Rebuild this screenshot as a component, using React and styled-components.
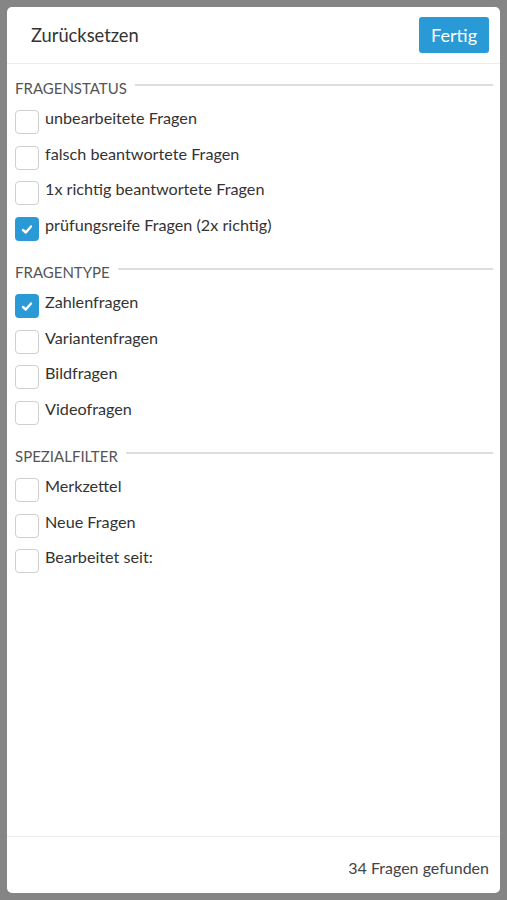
import React from "react";
import styled, { createGlobalStyle } from "styled-components";

const Global = createGlobalStyle`
  html, body {
    margin: 0;
    padding: 0;
    background: #858585;
    font-family: Lato, "Open Sans", sans-serif;
  }
`;

const Page = styled.div`
  padding: 7px;
  height: 900px;
  box-sizing: border-box;
`;

const Modal = styled.div`
  background: #fff;
  border-radius: 5px;
  height: 886px;
  display: flex;
  flex-direction: column;
  overflow: hidden;
`;

const Header = styled.header`
  display: flex;
  align-items: center;
  justify-content: space-between;
  height: 57px;
  padding: 0 11px 0 24px;
  border-bottom: 1px solid #ececec;
  box-sizing: border-box;
`;

const Title = styled.span`
  font-size: 18.3px;
  color: #333;
`;

const Button = styled.button`
  background: #2a9ad7;
  color: #fff;
  border: none;
  border-radius: 3px;
  font-family: inherit;
  font-size: 18px;
  height: 36px;
  padding: 0 12px;
`;

const Body = styled.div`
  flex: 1;
  padding: 14px 7px 0 8px;
`;

const Section = styled.section`
  margin-bottom: 10px;
`;

const SectionHead = styled.div`
  display: flex;
  align-items: center;
  gap: 8px;
  font-size: 15px;
  color: #555;
  text-transform: uppercase;
  height: 20px;
  margin-bottom: 12px;

  &::after {
    content: "";
    flex: 1;
    height: 2px;
    background: #ddd;
    margin-top: -6px;
  }
`;

const Row = styled.label`
  display: flex;
  align-items: flex-start;
  gap: 6px;
  height: 35.5px;
  font-size: 16.2px;
  color: #333;
`;

const Box = styled.span`
  width: 24px;
  height: 24px;
  box-sizing: border-box;
  border-radius: 4px;
  border: ${(p) => (p.checked ? "none" : "1px solid #cfcfcf")};
  background: ${(p) => (p.checked ? "#2a9ad7" : "#fff")};
  display: flex;
  align-items: center;
  justify-content: center;
  flex-shrink: 0;
`;

const Label = styled.span`
  line-height: 20px;
  margin-top: -2px;
`;

const Footer = styled.footer`
  height: 57px;
  box-sizing: border-box;
  border-top: 1px solid #ececec;
  display: flex;
  align-items: center;
  justify-content: flex-end;
  padding: 4px 11px 0 0;
  font-size: 16px;
  color: #444;
`;

const Check = () => (
  <svg width="14" height="14" viewBox="0 0 14 14">
    <path
      d="M3 8 L5.8 10.5 L11 4.5"
      fill="none"
      stroke="#fff"
      strokeWidth="2.4"
      strokeLinecap="round"
      strokeLinejoin="round"
    />
  </svg>
);

const sections = [
  {
    title: "Fragenstatus",
    items: [
      ["unbearbeitete Fragen", false],
      ["falsch beantwortete Fragen", false],
      ["1x richtig beantwortete Fragen", false],
      ["prüfungsreife Fragen (2x richtig)", true],
    ],
  },
  {
    title: "Fragentype",
    items: [
      ["Zahlenfragen", true],
      ["Variantenfragen", false],
      ["Bildfragen", false],
      ["Videofragen", false],
    ],
  },
  {
    title: "Spezialfilter",
    items: [
      ["Merkzettel", false],
      ["Neue Fragen", false],
      ["Bearbeitet seit:", false],
    ],
  },
];

export default function App() {
  return (
    <Page>
      <Global />
      <Modal>
        <Header>
          <Title>Zurücksetzen</Title>
          <Button>Fertig</Button>
        </Header>
        <Body>
          {sections.map((s) => (
            <Section key={s.title}>
              <SectionHead>{s.title}</SectionHead>
              {s.items.map(([text, checked]) => (
                <Row key={text}>
                  <Box checked={checked}>{checked && <Check />}</Box>
                  <Label>{text}</Label>
                </Row>
              ))}
            </Section>
          ))}
        </Body>
        <Footer>34 Fragen gefunden</Footer>
      </Modal>
    </Page>
  );
}
